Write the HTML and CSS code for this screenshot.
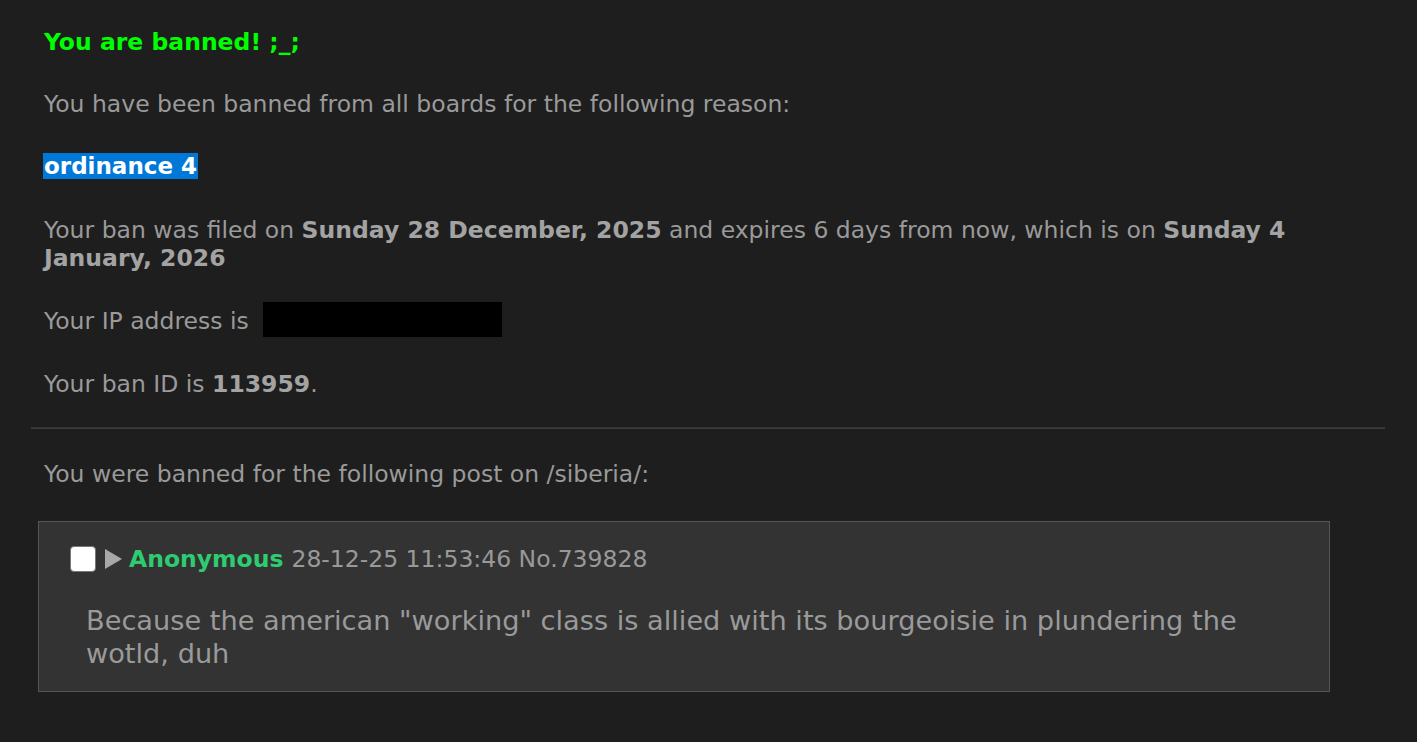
FILE: index.html
```html
<!DOCTYPE html>
<html>
<head>
<meta charset="utf-8">
<link rel="stylesheet" href="styles.css">
</head>
<body>
<div class="page">
  <h1 class="title">You are banned! ;_;</h1>
  <p class="para">You have been banned from all boards for the following reason:</p>
  <p class="para reason"><span class="sel">ordinance 4</span></p>
  <p class="para filed">Your ban was filed on <strong>Sunday 28 December, 2025</strong> and expires 6 days from now, which is on <strong>Sunday 4 January, 2026</strong></p>
  <p class="para">Your IP address is <span class="redact"></span></p>
  <p class="para banid">Your ban ID is <strong>113959</strong>.</p>
  <hr class="rule">
  <p class="para after-rule">You were banned for the following post on /siberia/:</p>
  <div class="post">
    <div class="post-head">
      <span class="check"></span>
      <span class="tri"></span>
      <span class="name">Anonymous</span>
      <span class="meta">28-12-25 11:53:46 No.739828</span>
    </div>
    <div class="post-body">Because the american "working" class is allied with its bourgeoisie in plundering the wotld, duh</div>
  </div>
</div>
</body>
</html>
```

FILE: styles.css
```css
html, body {
  margin: 0;
  padding: 0;
  background: #1e1e1e;
}
body {
  font-family: "DejaVu Sans", Verdana, sans-serif;
  color: #9a9a9a;
  font-size: 23.5px;
  line-height: 28px;
}
.page {
  margin: 0 32px 0 31px;
  padding-top: 28px;
  padding-bottom: 40px;
}
.title {
  margin: 0 0 0 13px;
  font-size: 23.5px;
  line-height: 28px;
  font-weight: bold;
  color: #00ff00;
}
.para {
  margin: 34px 0 0 13px;
  padding-right: 90px;
}
.para.filed {
  margin-top: 36px;
}
.para.banid {
  margin-top: 35px;
}
.para.after-rule {
  margin-top: 31px;
}
.para strong {
  color: #a3a3a3;
}
.reason {
  font-weight: bold;
  font-size: 23px;
}
.sel {
  background: #0078d7;
  color: #ffffff;
  padding: 0 1px;
  margin-left: -1px;
}
.redact {
  display: inline-block;
  width: 239px;
  height: 35px;
  margin: -4px 0 -4px 7px;
  background: #000;
  vertical-align: -4px;
}
.rule {
  margin: 29px 0 0 0;
  border: 0;
  border-top: 1px solid #333;
  border-bottom: 1px solid #3c3c3c;
  height: 0;
}
.post {
  margin: 33px 0 0 7px;
  width: 1292px;
  background: #333333;
  border: 1px solid #555555;
  padding: 23px 0 21px 31px;
  box-sizing: border-box;
}
.post-head {
  display: flex;
  align-items: center;
  height: 28px;
  font-size: 23.5px;
}
.check {
  width: 24px;
  height: 24px;
  background: #ffffff;
  border: 1px solid #777;
  border-radius: 4px;
  margin-right: 9px;
}
.tri {
  width: 0;
  height: 0;
  border-top: 10px solid transparent;
  border-bottom: 10px solid transparent;
  border-left: 17px solid #a8a8a8;
  margin-right: 7px;
}
.name {
  color: #2ecc71;
  font-weight: bold;
  margin-right: 8px;
}
.meta {
  color: #999;
}
.post-body {
  margin: 31px 0 0 16px;
  font-size: 27.2px;
  line-height: 33px;
  padding-right: 20px;
}
```
